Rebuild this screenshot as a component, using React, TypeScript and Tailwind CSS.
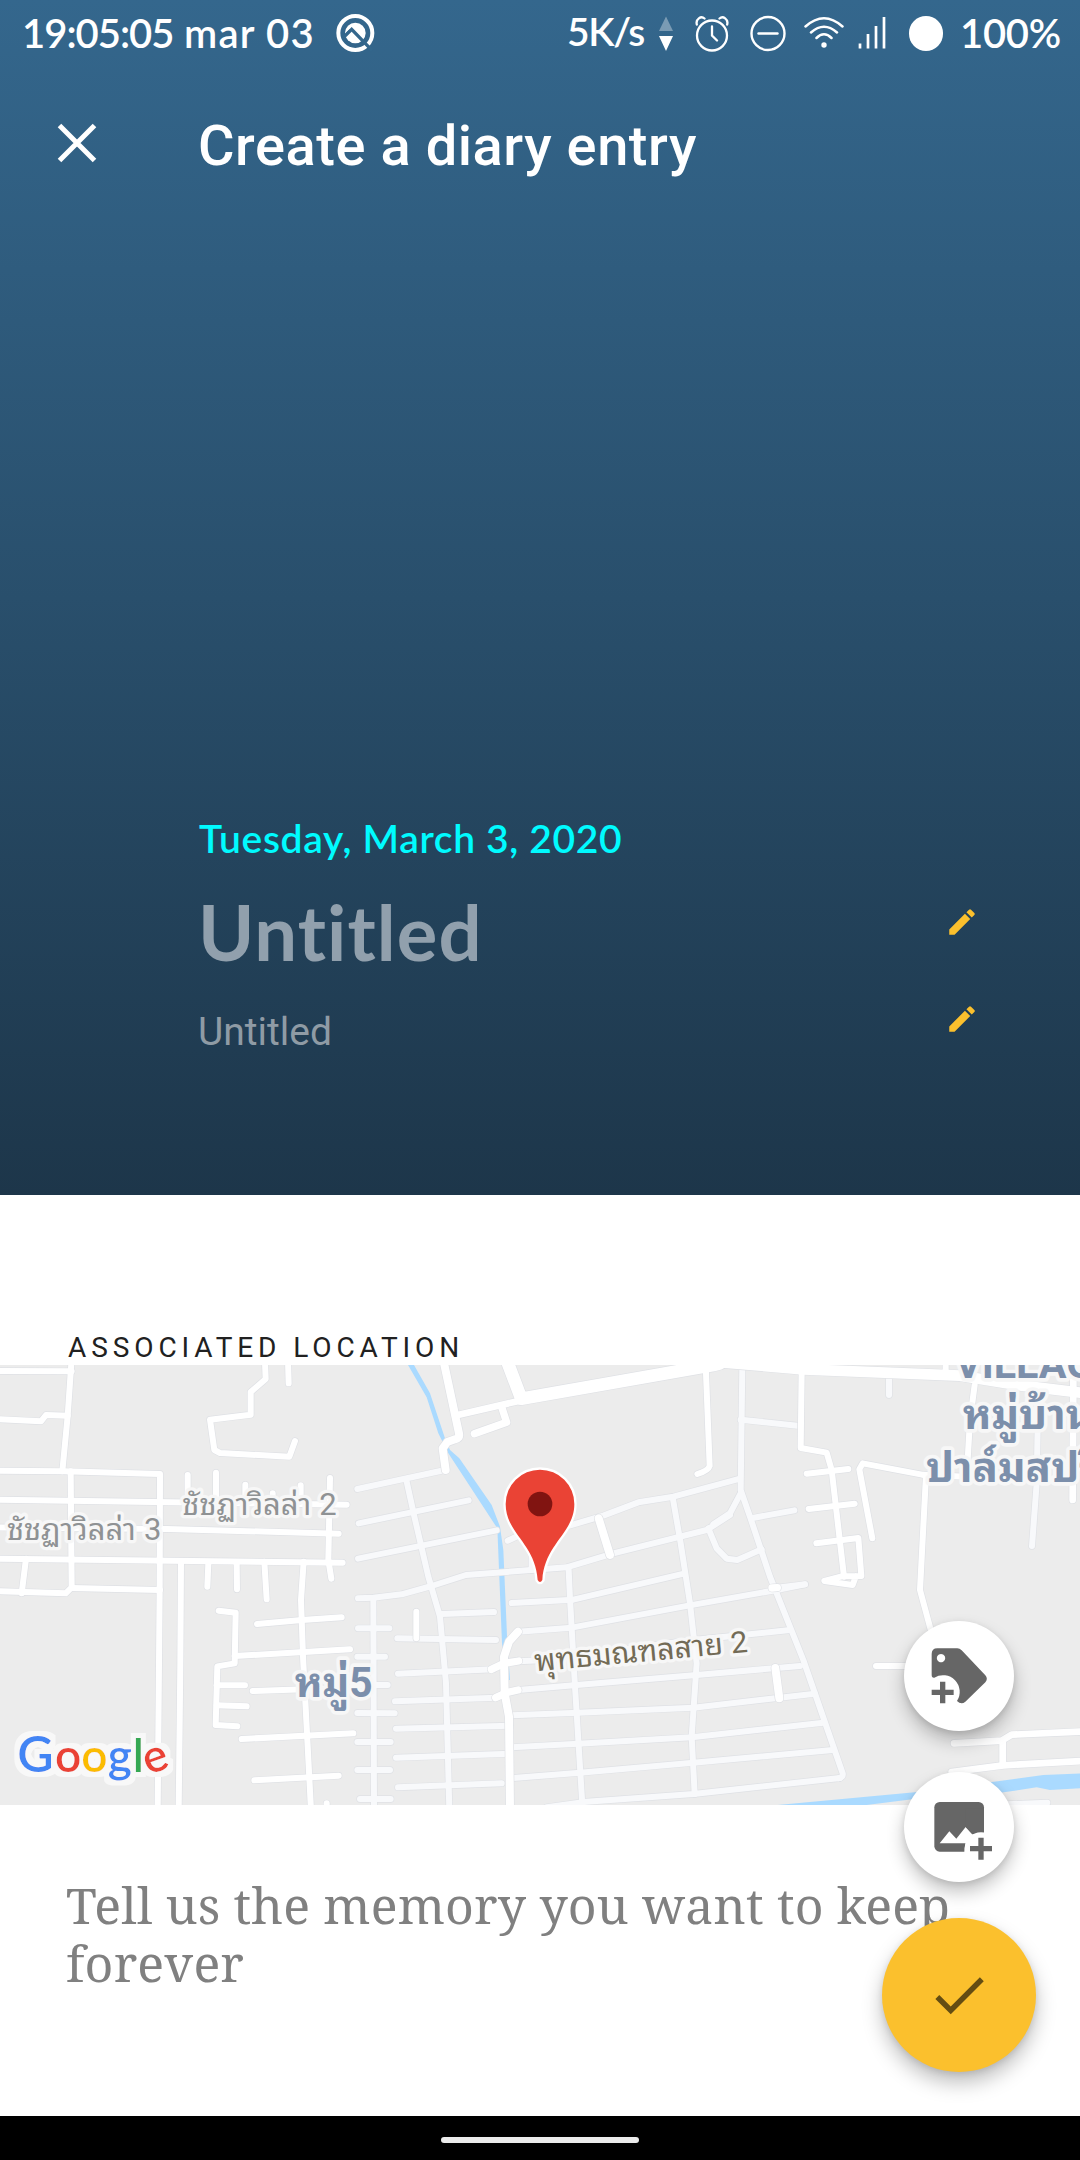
import React from "react";

const GOOGLE = "font-['Google_Sans','Product_Sans',Lato,sans-serif] [font-variant-ligatures:none]";

type Road = { d: string; w?: number };

// Map geometry, in thirds of a pixel, split in three 1080-unit wide tiles.
const westWhite: Road[] = [
  { d: "M-20 183 L215 184" },
  { d: "M214 160 L203 318 L187 484" },
  { d: "M-20 327 L123 334 L138 315 L203 317" },
  { d: "M-20 482 L190 484 L480 492 L479 840 L473 1500" },
  { d: "M212 484 L215 832 L197 850 L-20 843" },
  { d: "M-20 569 L1040 584" },
  { d: "M-20 652 L500 657 L1016 671" },
  { d: "M-20 746 L1028 758" },
  { d: "M215 834 L480 840" },
  { d: "M78 746 L65 850" },
  { d: "M563 495 V570" }, { d: "M648 488 V572" }, { d: "M736 524 V574" }, { d: "M818 550 V576" }, { d: "M902 526 V576" },
  { d: "M990 504 L985 750 L994 806" },
  { d: "M543 755 L541 1060 L536 1500" },
  { d: "M625 760 L622 830" }, { d: "M710 760 L711 838" }, { d: "M793 755 L800 868" },
  { d: "M911 755 L903 870 L909 1040 L933 1500" },
  { d: "M656 902 L707 908 L704 1060 L652 1069 L647 1245 L712 1249" },
  { d: "M771 942 L906 930 L1025 922" },
  { d: "M704 1038 L1050 1018" },
  { d: "M650 1126 H735" }, { d: "M650 1186 L740 1189" },
  { d: "M758 1143 L1000 1135" }, { d: "M725 1287 L1060 1270" }, { d: "M763 1411 L1016 1397" },
  { d: "M795 155 L797 207 L752 246 V314 L630 329 L643 420 L660 429 L868 440 L885 393" },
  { d: "M864 150 L866 220" }, { d: "M980 1480 V1500" },
];
const midPale: Road[] = [
  { d: "M-8 537 L255 480" }, { d: "M-4 640 L326 571" }, { d: "M-6 746 L410 661" },
  { d: "M140 515 L165 628 L205 800 L240 920 L258 1120 L268 1500" },
  { d: "M-6 865 L40 863 L125 853 L215 828 L318 795 L620 772 L760 730 L1040 660 L1110 615" },
  { d: "M40 865 L42 1500" },
  { d: "M245 912 L402 906" }, { d: "M112 985 L408 990" }, { d: "M114 1091 L400 1078" }, { d: "M105 1174 L410 1163" },
  { d: "M108 1256 L450 1247" }, { d: "M108 1343 L450 1331" }, { d: "M114 1432 L425 1420" },
  { d: "M-6 955 H88" }, { d: "M-8 1040 H75" }, { d: "M0 1125 H83" }, { d: "M-8 1209 L104 1210" }, { d: "M-8 1296 H92" }, { d: "M-8 1380 H90" }, { d: "M0 1467 H92" },
  { d: "M443 692 L480 675" }, { d: "M515 780 V720" },
  { d: "M600 655 L730 617 L835 577 L940 560 L1110 514 L1140 506" },
  { d: "M626 780 L630 866 L645 1130 L668 1500" },
  { d: "M455 879 L640 869 L975 790" },
  { d: "M475 965 L635 953 L985 887 L1250 840 L1335 823" },
  { d: "M475 1054 L560 1050 L1000 990 L1290 960" },
  { d: "M475 1140 L650 1125 L1010 1095 L1320 1068" },
  { d: "M455 1216 L655 1208 L1000 1193 L1365 1151" },
  { d: "M455 1312 L655 1301 L995 1282 L1390 1238" },
  { d: "M460 1404 L660 1388 L1000 1358 L1418 1320" },
  { d: "M560 1492 L680 1475 L1000 1452 L1440 1404" },
  { d: "M938 562 L962 700 L990 880 L1010 1060 L995 1280 L1004 1452" },
  { d: "M1045 655 L1070 715 L1100 746 L1132 750 L1205 718" },
];
const midWhite: Road[] = [
  { d: "M250 150 L297 370 Q300 384 285 388 L262 396 L248 415 L257 480", w: 24 },
  { d: "M290 316 L480 272", w: 20 },
  { d: "M440 150 L484 266 L1060 165 L1080 160", w: 38 },
  { d: "M424 288 L440 337 L343 371", w: 22 },
  { d: "M1037 165 L1049 468 Q1045 482 1012 492", w: 18 },
  { d: "M716 625 L750 735", w: 24 },
  { d: "M169 905 V985", w: 18 },
  { d: "M474 965 L447 995 L432 1040 L434 1150 L447 1220 L450 1500", w: 24 },
  { d: "M394 1078 L432 1060 L476 1053", w: 22 }, { d: "M407 1163 L440 1148 L474 1140", w: 22 },
];
const eastPale: Road[] = [
  { d: "M67 165 L62 540 L90 620 L150 800 L250 1050 L368 1390 Q371 1402 355 1405" },
  { d: "M62 329 L232 347" }, { d: "M62 550 L30 610 L-20 643" },
  { d: "M98 624 L223 601" }, { d: "M165 834 L255 823" },
  { d: "M507 200 V255" }, { d: "M953 350 L950 520 L936 708" }, { d: "M810 1485 L982 1478" },
];
const eastWhite: Road[] = [
  { d: "M-20 155 L250 178 L720 197 L900 226 L1100 250", w: 32 },
  { d: "M245 185 L242 414 L320 428 L335 480 L372 800" },
  { d: "M260 491 L385 477" }, { d: "M266 597 L404 581" },
  { d: "M289 700 L415 684 L424 798 L365 799 L313 813 L398 825 L408 798" },
  { d: "M457 685 L418 478 L428 460 L618 496 L600 840 L635 970", w: 18 },
  { d: "M610 494 L800 503" }, { d: "M764 225 L750 330 L740 500" },
  { d: "M677 165 V190" }, { d: "M1060 210 L1058 570", w: 20 },
  { d: "M156 834 L172 833", w: 22 }, { d: "M166 1074 L178 1165", w: 24 },
  { d: "M468 1068 H570" },
  { d: "M702 1300 L845 1292 L875 1274 L1100 1264", w: 20 },
  { d: "M848 1292 V1360", w: 20 }, { d: "M695 1386 L850 1366 L1100 1352", w: 20 },
];

const tiles = [
  { x: "translate(0 0)", pale: [] as Road[], white: westWhite },
  { x: "translate(1080 0)", pale: midPale, white: midWhite },
  { x: "translate(2160 0)", pale: eastPale, white: eastWhite },
];

function Layer({ kind }: { kind: "pale" | "white" }) {
  const fill = kind === "pale" ? "#f8f9fb" : "#ffffff";
  return (
    <g fill="none" strokeLinecap="round" strokeLinejoin="round">
      {tiles.map((t) => (
        <g key={t.x} transform={t.x} stroke="#dfe1e5">
          {t[kind].map((r) => <path key={r.d} d={r.d} strokeWidth={(r.w ?? 18) + 4} />)}
        </g>
      ))}
      {tiles.map((t) => (
        <g key={t.x} transform={t.x} stroke={fill}>
          {t[kind].map((r) => <path key={r.d} d={r.d} strokeWidth={r.w ?? 18} />)}
        </g>
      ))}
    </g>
  );
}

function MapView() {
  const thai = "'Noto Sans Thai Looped','Noto Looped Thai','Droid Sans Thai',Loma,Waree,Garuda,'Noto Sans Thai','Noto Sans',sans-serif";
  return (
    <svg className="block h-[440px] w-full shrink-0 bg-[#ececec]" viewBox="0 165 3240 1320">
      <defs>
        <filter id="halo" x="-10%" y="-20%" width="120%" height="140%">
          <feMorphology in="SourceAlpha" operator="dilate" radius="14" result="grown" />
          <feFlood floodColor="#f8f8f8" />
          <feComposite in2="grown" operator="in" result="edge" />
          <feMerge><feMergeNode in="edge" /><feMergeNode in="SourceGraphic" /></feMerge>
        </filter>
      </defs>
      <g fill="#aadaff">
        <path d="M1224 165 h18 L1290 250 L1335 385 L1350 420 L1378 445 L1475 585 L1500 650 L1510 720 L1522 1000 L1530 1110 H1520 L1506 1000 L1492 655 L1345 430 L1315 370 L1280 262z" />
        <path d="M2280 1490 L2760 1445 L3130 1395 L3260 1390 V1434 L3150 1440 L3110 1432 L2990 1450 L2760 1465 L2560 1490z" />
      </g>
      <Layer kind="pale" />
      <Layer kind="white" />
      <g strokeLinejoin="round" stroke="#f7f7f7" fontFamily={thai} style={{ paintOrder: "stroke" }}>
        <g fill="#8f9294" strokeWidth="20" fontSize="92">
          <text x="546" y="616" textLength="464" lengthAdjust="spacingAndGlyphs">ชัชฏาวิลล่า <tspan fontFamily="Roboto">2</tspan></text>
          <text x="20" y="691" textLength="464" lengthAdjust="spacingAndGlyphs">ชัชฏาวิลล่า <tspan fontFamily="Roboto">3</tspan></text>
        </g>
        <g fill="#7c8fab" strokeWidth="22" fontSize="126" fontWeight="700">
          <text x="884" y="1160" textLength="234" lengthAdjust="spacingAndGlyphs">หมู่<tspan fontFamily="Roboto">5</tspan></text>
          <text x="2864" y="205" fontFamily="Roboto, sans-serif" fontSize="124">VILLAGE</text>
          <text x="2888" y="358">หมู่บ้าน</text>
          <text x="2778" y="515">ปาล์มสปริง</text>
        </g>
        <text x="1606" y="1084" transform="rotate(-5.2 1606 1084)" fill="#736b56" strokeWidth="20" fontSize="90" textLength="642" lengthAdjust="spacingAndGlyphs">พุทธมณฑลสาย <tspan fontFamily="Roboto">2</tspan></text>
      </g>
      <path d="M1620 479 A103 103 0 0 0 1517 582 C1517 670 1606 700 1613 810 Q1620 822 1627 810 C1634 700 1723 670 1723 582 A103 103 0 0 0 1620 479z" fill="#ea4335" stroke="#fff" strokeWidth="14" style={{ paintOrder: "stroke" }} />
      <circle cx="1620" cy="582" r="37" fill="#811411" />
      <g fontFamily="'Product Sans',Lato,sans-serif" fontSize="138" fontWeight="600" filter="url(#halo)">
        <text x="52 165 244 323 398" y="1385">
          <tspan fill="#4285f4" fontSize="150">G</tspan><tspan fill="#ea4335">o</tspan><tspan fill="#fbbc05">o</tspan><tspan fill="#4285f4">g</tspan><tspan fill="#34a853">l</tspan>
        </text>
        <text x="431" y="1385" transform="rotate(-20 468 1351)" fill="#ea4335">e</text>
      </g>
    </svg>
  );
}

function Pencil() {
  return (
    <svg className="h-[34px] w-[34px]" viewBox="0 0 24 24" fill="#fbc02d">
      <path d="M3 17.25V21h3.75L17.81 9.94l-3.75-3.75L3 17.25zM20.71 7.04a.996.996 0 0 0 0-1.41l-2.34-2.34a.996.996 0 0 0-1.41 0l-1.83 1.83 3.75 3.75 1.83-1.83z" />
    </svg>
  );
}

function StatusBar() {
  return (
    <div className={`flex h-[66px] shrink-0 items-start text-[40px] leading-[66px] font-semibold text-white ${GOOGLE}`}>
      <span className="ml-[22px] w-[162px] tracking-[-1px] whitespace-nowrap">19:05:05</span>
      <span className="w-[128px] tracking-[1.2px] whitespace-nowrap">mar 03</span>
      <svg className="mt-[8px] ml-[18px] h-[52px] w-[52px]" viewBox="0 0 156 156" fill="none">
        <circle cx="76" cy="75" r="51" stroke="#fff" strokeWidth="12" />
        <circle cx="76" cy="75" r="31" fill="#fff" />
        <path d="M40 89L65 64L126 127" stroke="#34678c" strokeWidth="10" />
        <path d="M47 78L60 65" stroke="#34678c" strokeWidth="4" />
      </svg>
      <span className="ml-[185px] w-[79px] text-[39px] leading-[63px] tracking-[-1.4px] whitespace-nowrap">5K/s</span>
      <svg className="mt-[16px] ml-[13px] h-[36px] w-[14px]" viewBox="0 0 14 36" fill="#fff">
        <path d="M7 0.500 L14 15 H0z" opacity=".35" /><path d="M0 20 H14 L7 35z" />
      </svg>
      <svg className="mt-[15px] ml-[22px] h-[38px] w-[34px]" viewBox="0 0 34 38" fill="none" stroke="#fff" strokeWidth="2.300" strokeLinecap="round">
        <circle cx="17" cy="20.500" r="15" /><path d="M17 11.500V20.500L22 25.500M1.800 9.500C.5 4 6 .5 9.500 3.500M32.200 9.500C33.500 4 28 .5 24.500 3.500" />
      </svg>
      <svg className="mt-[15px] ml-[21px] h-[37px] w-[36px]" viewBox="0 0 36 37" fill="none" stroke="#fff" strokeWidth="2.400" strokeLinecap="round">
        <circle cx="18" cy="18.500" r="16.500" /><path d="M8.500 18.500H27.500" />
      </svg>
      <svg className="mt-[15px] ml-[18px] h-[34px] w-[40px]" viewBox="0 0 40 34" fill="none" stroke="#fff" strokeWidth="2.500" strokeLinecap="round">
        <path d="M1.500 11.500Q20-5 38.500 11.500M7 17.500Q20 6 33 17.500M12.500 23Q20 15.500 27.500 23" /><circle cx="20" cy="30" r="2.700" fill="#fff" stroke="none" />
      </svg>
      <svg className="mt-[16px] ml-[14px] h-[34px] w-[29px]" viewBox="0 0 29 34" stroke="#fff" strokeWidth="2.700">
        <path d="M2 27.500V32.500M10 18V32.500M18 10V32.500M26 1V32.500" />
      </svg>
      <span className="mt-[16px] ml-[22px] h-[35px] w-[34px] rounded-full bg-white" />
      <span className="ml-[17px] tracking-[-0.3px] whitespace-nowrap">100%</span>
    </div>
  );
}

function Header() {
  return (
    <header className="flex h-[1195px] shrink-0 flex-col bg-linear-to-b from-[#34678d] via-[#294f6c] to-[#1d364a]">
      <StatusBar />
      <div className="flex h-[160px] items-center font-[Roboto]">
        <svg className="mb-[6px] ml-[57px] h-[40px] w-[40px]" viewBox="0 0 40 40" stroke="#fff" strokeWidth="5">
          <path d="M2.500 2.500L37.500 37.500M37.500 2.500L2.500 37.500" />
        </svg>
        <h1 className="ml-[101px] text-[56px] leading-[64px] font-medium tracking-[0.55px] text-white">Create a diary entry</h1>
      </div>
      <div className="mt-auto ml-[199px] flex h-[397px] flex-col">
        <p className={`mt-[16px] text-[39px] leading-[48px] font-semibold tracking-[0.65px] text-[#00fbff] ${GOOGLE}`}>Tuesday, March 3, 2020</p>
        <div className="mt-[18px] flex h-[104px] items-center">
          <p className={`-ml-[1px] w-[747px] text-[76px] leading-[104px] font-bold tracking-[1.1px] text-[#91a0ad] ${GOOGLE}`}>Untitled</p>
          <div className="mb-[20px]"><Pencil /></div>
        </div>
        <div className="mt-[18px] flex h-[60px] items-center font-[Roboto]">
          <p className="-ml-[1px] w-[747px] text-[39px] leading-[60px] text-[#8f9ba5]">Untitled</p>
          <div className="mb-[26px]"><Pencil /></div>
        </div>
      </div>
    </header>
  );
}

export default function App() {
  return (
    <main className="relative flex h-[2160px] w-[1080px] flex-col overflow-hidden bg-white">
      <Header />
      <section className="flex h-[610px] shrink-0 flex-col">
        <h2 className="mt-auto -mb-[1px] ml-[68px] font-[Roboto] text-[28px] leading-[36px] tracking-[4.9px] text-[#212121]">ASSOCIATED LOCATION</h2>
        <MapView />
      </section>
      <p className="mt-[71px] ml-[66px] w-[910px] font-['Noto_Serif','DejaVu_Serif',serif] text-[50px] leading-[58px] tracking-[0.17px] text-[#808080]">
        Tell us the memory you want to keep forever
      </p>
      <div className="mt-auto flex h-[44px] shrink-0 items-center justify-center bg-black pt-[4px]">
        <div className="h-[6px] w-[198px] rounded-full bg-[#ebebeb]" />
      </div>

      <div className="absolute top-[1621px] right-[44px] flex w-[154px] flex-col items-center">
        <button className="h-[110px] w-[110px] rounded-full bg-white shadow-[0_10px_18px_rgba(0,0,0,0.24),0_2px_6px_rgba(0,0,0,0.1)]">
          <svg viewBox="552 933 330 330" fill="#666">
            <path fillRule="evenodd" d="M635 1032Q635 1015 652 1015H712Q719 1015 725 1021L796 1096Q805 1107 796 1117L736 1175Q724 1186 711 1173A50 50 0 0 0 643 1103Q635 1104 635 1095zM663 1032a12.500 12.500 0 1 0 .1 0z" />
            <path d="M660 1115h16v24h25v16h-25v25h-16v-25h-25v-16h25z" />
          </svg>
        </button>
        <button className="mt-[41px] h-[110px] w-[110px] rounded-full bg-white shadow-[0_10px_18px_rgba(0,0,0,0.24),0_2px_6px_rgba(0,0,0,0.1)]">
          <svg viewBox="0 0 330 330" fill="#666">
            <rect x="91" y="90" width="149" height="149" rx="16" />
            <path d="M107 214L136 178L157 200L185 165L205 187L241 181V240H181Q181 226 185 214z" fill="#fff" />
            <path d="M205 187L185 165V110H240V183z" />
            <circle cx="231" cy="230" r="49" fill="#fff" />
            <path d="M223 197h16v25h25v16h-25v25h-16v-25h-25v-16h25z" />
          </svg>
        </button>
        <button className="mt-[36px] flex h-[154px] w-[154px] items-center justify-center rounded-full bg-[#fbc02d] shadow-[0_11px_20px_rgba(0,0,0,0.25),0_2px_6px_rgba(0,0,0,0.1)]">
          <svg className="h-[66px] w-[66px]" viewBox="0 0 24 24" fill="#644d12">
            <path d="M9 16.170L4.830 12l-1.420 1.410L9 19 21 7l-1.410-1.410z" />
          </svg>
        </button>
      </div>
    </main>
  );
}
